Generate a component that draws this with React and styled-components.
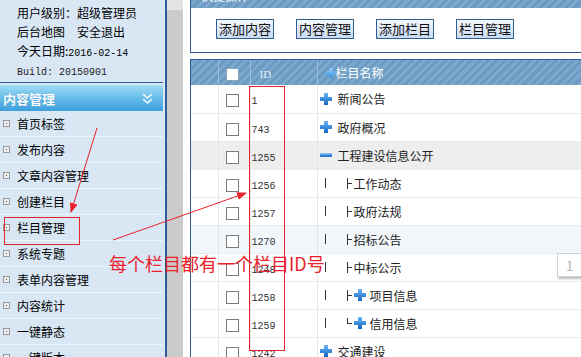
import React from 'react';
import styled, { createGlobalStyle } from 'styled-components';

const GlobalStyle = createGlobalStyle`
  html, body {
    margin: 0;
    padding: 0;
    background: #ffffff;
  }
  body {
    font-family: "Noto Sans CJK SC", "Liberation Sans", sans-serif;
    font-size: 12px;
    color: #000;
  }
`;

const Page = styled.div`
  position: relative;
  width: 581px;
  height: 357px;
  overflow: hidden;
  display: flex;
  flex-direction: row;
`;

const Sidebar = styled.div`
  width: 165px;
  flex: none;
  background: #d9e7f5;
  border-right: 2px solid #2c5d98;
  display: flex;
  flex-direction: column;
  & > * { flex: none; }
`;

const Info = styled.div`
  width: 163px;
  height: 79px;
  padding-top: 3px;
  border-bottom: 1px solid #2c5d98;
  box-sizing: content-box;
`;

const InfoLine = styled.div`
  height: 19px;
  line-height: 19px;
  padding-left: 17px;
  white-space: nowrap;
  font-size: 12px;
`;

const Mono = styled.span`
  font-family: "Liberation Mono", monospace;
  font-size: 10px;
  color: ${p => p.$dim ? '#222' : '#000'};
`;

const GroupHead = styled.div`
  margin-top: 2px;
  width: 163px;
  height: 26px;
  display: flex;
  align-items: center;
  justify-content: space-between;
  padding: 0 10px 0 3px;
  box-sizing: border-box;
  background: linear-gradient(to bottom, #a3dbf6 0%, #6cc0ec 45%, #3e9fdb 100%);
  color: #fff;
  font-weight: bold;
  font-size: 13px;
  text-shadow: 0 0 1px #2a7fb8;
`;

const MenuItem = styled.div`
  width: 163px;
  height: 26px;
  display: flex;
  align-items: center;
  gap: 7px;
  padding-left: 3px;
  box-sizing: border-box;
  border-bottom: 1px solid #eef4fb;
  font-size: 12px;
`;

const Bullet = styled.span`
  width: 7px;
  height: 7px;
  border: 1px solid #9a9a9a;
  box-sizing: border-box;
  background: #eeeeee;
  display: inline-flex;
  align-items: center;
  justify-content: center;
  &::after {
    content: '';
    width: 1px;
    height: 1px;
    background: #555;
  }
`;

const Splitter = styled.div`
  width: 16px;
  flex: none;
  background: #cbcbcb;
  margin-right: 7px;
  display: flex;
  flex-direction: column;
`;

const SplitterTop = styled.div`
  height: 10px;
  background: #e4e4e4;
`;

const Main = styled.div`
  flex: 1;
  min-width: 420px;
  margin-top: -17px;
  display: flex;
  flex-direction: column;
  gap: 6px;
`;

const Panel = styled.div`
  border: 1px solid #2c5d98;
  border-right: none;
  background: #fff;
`;

const Striped = styled.div`
  background: repeating-linear-gradient(-45deg, #6b9bc2 0 3px, #7ba8cc 3px 6px);
`;

const PanelHead = styled(Striped)`
  height: 24px;
  line-height: 24px;
  padding-left: 10px;
  color: #fff;
  font-size: 12px;
`;

const Toolbar = styled.div`
  height: 44px;
  display: flex;
  align-items: flex-start;
  padding: 11px 0 0 25px;
  gap: 22px;
  box-sizing: border-box;
`;

const QuickButton = styled.button`
  height: 20px;
  padding: 0 2px;
  border: 1px solid #2f5f92;
  background: linear-gradient(to bottom, #f6f9fe, #c9dbf2);
  font-family: "Noto Sans CJK SC", sans-serif;
  font-size: 13px;
  line-height: 18px;
  color: #111;
  cursor: pointer;
`;

const Table = styled.table`
  border-collapse: collapse;
  table-layout: fixed;
  width: 100%;
`;

const HeadRow = styled(Striped).attrs({ as: 'tr' })`
  height: 25px;
`;

const Th = styled.th`
  box-sizing: border-box;
  width: ${p => p.$w ? `${p.$w}px` : 'auto'};
  padding: 0;
  padding-left: ${p => p.$pl || 0}px;
  border-left: 1px solid #9fbdd6;
  text-align: ${p => p.$center ? 'center' : 'left'};
  font-weight: normal;
  color: #fff;
  font-size: 12px;
  &:first-child { border-left: none; }
`;

const IdHead = styled.span`
  font-family: "Liberation Serif", serif;
  font-size: 11px;
  color: #e8eef5;
`;

const Row = styled.tr`
  height: 28px;
  background: ${p => p.$bg || '#fff'};
  border-bottom: 1px solid #ebebeb;
`;

const Td = styled.td`
  box-sizing: border-box;
  padding: 0;
  padding-left: ${p => p.$pl || 0}px;
  border-left: 1px solid #e6e6e6;
  text-align: ${p => p.$center ? 'center' : 'left'};
  white-space: nowrap;
  &:first-child { border-left: none; }
`;

const Check = styled.span`
  display: inline-block;
  width: 13px;
  height: 13px;
  box-sizing: border-box;
  border: 1px solid ${p => p.$head ? '#8aa6bf' : '#7a7a7a'};
  background: #fff;
  vertical-align: middle;
  margin-right: 3px;
`;

const IdText = styled.span`
  font-family: "Liberation Mono", monospace;
  font-size: 10px;
  color: #333;
`;

const NameCell = styled.div`
  display: flex;
  align-items: center;
  height: 27px;
  font-size: 12px;
  color: #222;
`;

const Pipe = styled.span`
  width: 1px;
  height: 10px;
  background: #333;
  margin: 0 21px 0 7px;
`;

const Branch = styled.span`
  position: relative;
  width: 6px;
  height: 11px;
  margin-right: 1px;
  &::before {
    content: '';
    position: absolute;
    left: 0;
    top: 0;
    width: 1px;
    height: ${p => p.$last ? '6px' : '11px'};
    background: #333;
  }
  &::after {
    content: '';
    position: absolute;
    left: 0;
    top: 5px;
    width: 5px;
    height: 1px;
    background: #333;
  }
`;

const Overlay = styled.svg`
  position: absolute;
  left: 0;
  top: 0;
  pointer-events: none;
`;

const Note = styled.div`
  position: absolute;
  left: 109px;
  top: 252px;
  font-family: "Noto Sans CJK SC", sans-serif;
  font-size: 18px;
  line-height: 22px;
  color: #e8222a;
  white-space: nowrap;
`;

const PageTip = styled.div`
  position: absolute;
  left: 557px;
  top: 253px;
  width: 26px;
  height: 24px;
  background: #fff;
  border: 1px solid #d0d0d0;
  box-shadow: 1px 2px 2px rgba(0, 0, 0, 0.25);
  color: #b0b0b0;
  font-size: 13px;
  line-height: 24px;
  padding-left: 8px;
  box-sizing: border-box;
`;

function PlusIcon({ size = 12, light }) {
  return (
    <svg width={size} height={size} viewBox="0 0 12 12" style={{ flex: 'none' }}>
      <defs>
        <linearGradient id={light ? 'pl' : 'pd'} x1="0" y1="0" x2="0" y2="1">
          <stop offset="0" stopColor={light ? '#8fd0ff' : '#69b6f2'} />
          <stop offset="1" stopColor={light ? '#3a8fe0' : '#1566c4'} />
        </linearGradient>
      </defs>
      <path d="M4 0h4v4h4v4H8v4H4V8H0V4h4z" fill={`url(#${light ? 'pl' : 'pd'})`} />
    </svg>
  );
}

function MinusIcon() {
  return (
    <svg width="12" height="12" viewBox="0 0 12 12" style={{ flex: 'none' }}>
      <rect x="0" y="4.5" width="12" height="3.5" fill="#2a7ad6" />
      <rect x="0" y="4.5" width="12" height="1.2" fill="#7dbdf5" />
    </svg>
  );
}

function Chevrons() {
  return (
    <svg width="11" height="11" viewBox="0 0 11 11">
      <path d="M1 1l4.5 4 4.5-4M1 6l4.5 4 4.5-4" stroke="#f4fbff" strokeWidth="1.6" fill="none" />
    </svg>
  );
}

const menu = ['首页标签', '发布内容', '文章内容管理', '创建栏目', '栏目管理', '系统专题', '表单内容管理', '内容统计', '一键静态', '一键版本'];

const rows = [
  { id: '1', name: '新闻公告', icon: 'plus' },
  { id: '743', name: '政府概况', icon: 'plus' },
  { id: '1255', name: '工程建设信息公开', icon: 'minus', bg: '#eeeeee' },
  { id: '1256', name: '工作动态', child: true },
  { id: '1257', name: '政府法规', child: true },
  { id: '1270', name: '招标公告', child: true, bg: '#f1f6fb' },
  { id: '1248', name: '中标公示', child: true },
  { id: '1258', name: '项目信息', child: true, icon: 'plus' },
  { id: '1259', name: '信用信息', child: true, icon: 'plus', last: true },
  { id: '1242', name: '交通建设', icon: 'plus' },
];

function NameContent({ row }) {
  if (!row.child) {
    return (
      <NameCell style={{ paddingLeft: 2, gap: 6 }}>
        {row.icon === 'minus' ? <MinusIcon /> : <PlusIcon />}
        {row.name}
      </NameCell>
    );
  }
  return (
    <NameCell>
      <Pipe />
      <Branch $last={row.last} />
      {row.icon && <span style={{ marginRight: 4, display: 'flex' }}><PlusIcon /></span>}
      {row.name}
    </NameCell>
  );
}

export default function App() {
  return (
    <>
      <GlobalStyle />
      <Page>
        <Sidebar>
          <Info>
            <InfoLine>用户级别：超级管理员</InfoLine>
            <InfoLine>后台地图　安全退出</InfoLine>
            <InfoLine>今天日期:<Mono>2016-02-14</Mono></InfoLine>
            <InfoLine><Mono $dim>Build: 20150901</Mono></InfoLine>
          </Info>
          <GroupHead>
            <span>内容管理</span>
            <Chevrons />
          </GroupHead>
          {menu.map(m => (
            <MenuItem key={m}>
              <Bullet />
              {m}
            </MenuItem>
          ))}
        </Sidebar>
        <Splitter>
          <SplitterTop />
        </Splitter>
        <Main>
          <Panel>
            <PanelHead>快捷操作</PanelHead>
            <Toolbar>
              <QuickButton>添加内容</QuickButton>
              <QuickButton>内容管理</QuickButton>
              <QuickButton>添加栏目</QuickButton>
              <QuickButton>栏目管理</QuickButton>
            </Toolbar>
          </Panel>
          <Panel>
            <Table>
              <thead>
                <HeadRow>
                  <Th $w={27} />
                  <Th $w={32} $center><Check $head /></Th>
                  <Th $w={67} $pl={9}><IdHead>ID</IdHead></Th>
                  <Th $pl={8}>
                    <span style={{ display: 'inline-flex', alignItems: 'center' }}>
                      <PlusIcon size={10} light />栏目名称
                    </span>
                  </Th>
                </HeadRow>
              </thead>
              <tbody>
                {rows.map(r => (
                  <Row key={r.id} $bg={r.bg}>
                    <Td />
                    <Td $center><Check /></Td>
                    <Td $pl={1}><IdText>{r.id}</IdText></Td>
                    <Td><NameContent row={r} /></Td>
                  </Row>
                ))}
              </tbody>
            </Table>
          </Panel>
        </Main>

        <Overlay width="581" height="357">
          <defs>
            <marker id="tip" markerWidth="10" markerHeight="8" refX="9" refY="4" orient="auto" markerUnits="userSpaceOnUse">
              <path d="M0 0L10 4L0 8z" fill="#e8222a" />
            </marker>
          </defs>
          <rect x="4.5" y="217.5" width="75" height="27" fill="none" stroke="#e8222a" strokeWidth="1" />
          <rect x="249.5" y="86.5" width="35" height="264" fill="none" stroke="#e8222a" strokeWidth="1" />
          <line x1="97" y1="128" x2="71" y2="212" stroke="#e8222a" strokeWidth="1" markerEnd="url(#tip)" />
          <line x1="113" y1="240" x2="246" y2="193" stroke="#e8222a" strokeWidth="1" markerEnd="url(#tip)" />
        </Overlay>
        <Note>每个栏目都有一个栏目ID号</Note>
        <PageTip>1</PageTip>
      </Page>
    </>
  );
}
